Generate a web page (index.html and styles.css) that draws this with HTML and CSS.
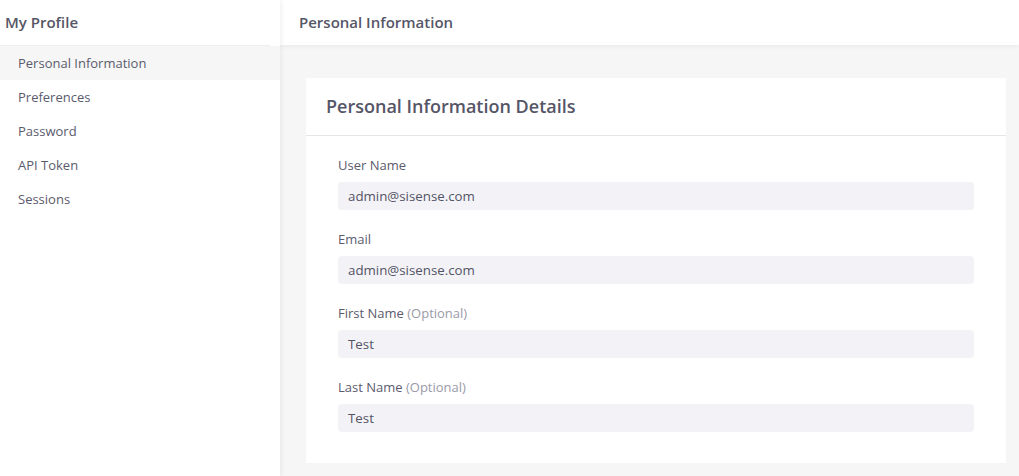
FILE: index.html
```
<!DOCTYPE html>
<html lang="en">
<head>
    <meta charset="UTF-8">
    <meta name="viewport" content="width=device-width, initial-scale=1.0">
    <title>My Profile</title>
    <link rel="stylesheet" href="styles.css">
</head>
<body>
    <aside class="sidebar">
        <div class="sidebar-title">My Profile</div>
        <ul class="nav">
            <li class="nav-item active">Personal Information</li>
            <li class="nav-item">Preferences</li>
            <li class="nav-item">Password</li>
            <li class="nav-item">API Token</li>
            <li class="nav-item">Sessions</li>
        </ul>
    </aside>
    <main class="main">
        <div class="main-header">Personal Information</div>
        <div class="content">
            <div class="card">
                <div class="card-header">Personal Information Details</div>
                <div class="card-body">
                    <div class="field">
                        <div class="field-label">User Name</div>
                        <div class="field-input">admin@sisense.com</div>
                    </div>
                    <div class="field">
                        <div class="field-label">Email</div>
                        <div class="field-input">admin@sisense.com</div>
                    </div>
                    <div class="field">
                        <div class="field-label">First Name <span class="optional">(Optional)</span></div>
                        <div class="field-input">Test</div>
                    </div>
                    <div class="field">
                        <div class="field-label">Last Name <span class="optional">(Optional)</span></div>
                        <div class="field-input">Test</div>
                    </div>
                </div>
            </div>
        </div>
    </main>
</body>
</html>
```
FILE: styles.css
```
html, body {
    height: 100%;
}
body {
    font-family: "Open Sans", Arial, sans-serif;
    margin: 0;
    display: flex;
    color: #5b5b6d;
    background-color: #f6f6f6;
    overflow: hidden;
}
.sidebar {
    width: 280px;
    flex-shrink: 0;
    background-color: #fff;
    box-shadow: 1px 0 5px rgba(0, 0, 0, 0.07);
    position: relative;
    z-index: 2;
}
.sidebar-title {
    height: 45px;
    line-height: 45px;
    padding-left: 5px;
    margin-right: 10px;
    font-size: 15px;
    font-weight: 600;
    color: #565667;
    border-bottom: 1px solid #efefef;
}
.nav {
    list-style: none;
    margin: 0;
    padding: 0;
}
.nav-item {
    height: 34px;
    line-height: 34px;
    padding-left: 18px;
    font-size: 13px;
    color: #5b5b6d;
}
.nav-item.active {
    background-color: #f6f6f6;
}
.main {
    flex: 1;
    display: flex;
    flex-direction: column;
}
.main-header {
    height: 45px;
    line-height: 45px;
    padding-left: 19px;
    background-color: #fff;
    font-size: 15px;
    font-weight: 600;
    color: #565667;
    box-shadow: 0 1px 5px rgba(0, 0, 0, 0.06);
    position: relative;
    z-index: 1;
}
.content {
    padding: 33px 0 0 26px;
}
.card {
    width: 700px;
    background-color: #fff;
}
.card-header {
    height: 57px;
    line-height: 57px;
    padding-left: 20px;
    font-size: 18px;
    font-weight: 600;
    color: #565667;
    border-bottom: 1px solid #e6e6e6;
}
.card-body {
    padding: 20px 32px 31px;
}
.field {
    margin-bottom: 20px;
}
.field:last-child {
    margin-bottom: 0;
}
.field-label {
    font-size: 13px;
    line-height: 18px;
    margin-bottom: 8px;
    color: #5b5b6d;
}
.optional {
    color: #9a9aa8;
}
.field-input {
    height: 28px;
    line-height: 28px;
    padding-left: 10px;
    border-radius: 4px;
    background-color: #f3f3f7;
    font-size: 13.3px;
    color: #545466;
}
```
